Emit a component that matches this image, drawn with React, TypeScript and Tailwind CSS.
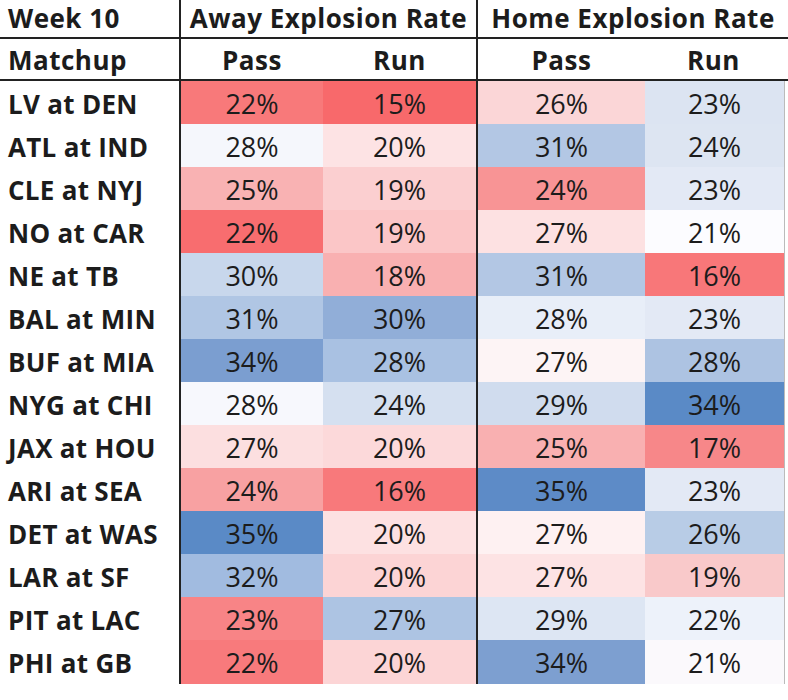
const rows: [string, [number, string], [number, string], [number, string], [number, string]][] = [
  ["LV at DEN", [22, "bg-[#f8797a]"], [15, "bg-[#f8696b]"], [26, "bg-[#fbd6d7]"], [23, "bg-[#dce4f2]"]],
  ["ATL at IND", [28, "bg-[#f5f7fc]"], [20, "bg-[#fde3e4]"], [31, "bg-[#b3c7e4]"], [24, "bg-[#dde5f2]"]],
  ["CLE at NYJ", [25, "bg-[#f9b2b3]"], [19, "bg-[#fbcfd0]"], [24, "bg-[#f89495]"], [23, "bg-[#e3e9f5]"]],
  ["NO at CAR", [22, "bg-[#f86d6f]"], [19, "bg-[#fbc6c7]"], [27, "bg-[#fde1e2]"], [21, "bg-[#fcfcff]"]],
  ["NE at TB", [30, "bg-[#c8d7ec]"], [18, "bg-[#f9b0b1]"], [31, "bg-[#b3c7e4]"], [16, "bg-[#f87779]"]],
  ["BAL at MIN", [31, "bg-[#b0c6e4]"], [30, "bg-[#91aed8]"], [28, "bg-[#e8eef8]"], [23, "bg-[#e3e9f5]"]],
  ["BUF at MIA", [34, "bg-[#7b9ed0]"], [28, "bg-[#a9c1e2]"], [27, "bg-[#fdf4f5]"], [28, "bg-[#adc3e2]"]],
  ["NYG at CHI", [28, "bg-[#f7f8fd]"], [24, "bg-[#d5e0f0]"], [29, "bg-[#d0dcee]"], [34, "bg-[#5a8ac6]"]],
  ["JAX at HOU", [27, "bg-[#fcdfe0]"], [20, "bg-[#fcd9da]"], [25, "bg-[#f9b0b1]"], [17, "bg-[#f78789]"]],
  ["ARI at SEA", [24, "bg-[#f8a1a2]"], [16, "bg-[#f8797b]"], [35, "bg-[#5d8bc7]"], [23, "bg-[#e3e9f5]"]],
  ["DET at WAS", [35, "bg-[#5a8ac6]"], [20, "bg-[#fde1e2]"], [27, "bg-[#fef1f2]"], [26, "bg-[#b8cce6]"]],
  ["LAR at SF", [32, "bg-[#a1bbe0]"], [20, "bg-[#fcd4d5]"], [27, "bg-[#fde3e4]"], [19, "bg-[#f9c9ca]"]],
  ["PIT at LAC", [23, "bg-[#f88486]"], [27, "bg-[#adc4e3]"], [29, "bg-[#dde6f3]"], [22, "bg-[#edf2fa]"]],
  ["PHI at GB", [22, "bg-[#f87a7c]"], [20, "bg-[#fcd5d6]"], [34, "bg-[#7d9fd0]"], [21, "bg-[#fbf9fc]"]],
]

export default function App() {
  return (
    <div className="w-[788px] h-[700px] bg-white text-[#1c1c1c] font-['Open_Sans','Liberation_Sans',sans-serif] text-[26px]">
      {/* Group header */}
      <div className="grid grid-cols-[181px_297px_310px] h-[39px] border-b-2 border-[#222] font-bold tracking-[0.5px]">
        <div className="pl-2 border-r-2 border-[#222] leading-[37px]">Week 10</div>
        <div className="text-center border-r-2 border-[#222] leading-[37px]">Away Explosion Rate</div>
        <div className="text-center leading-[37px]">Home Explosion Rate</div>
      </div>
      {/* Sub header */}
      <div className="grid grid-cols-[181px_142px_155px_167px_141px] h-[42px] border-b-2 border-[#222] font-bold tracking-[0.5px]">
        <div className="pl-2 border-r-2 border-[#222] leading-[40px] pt-[1px]">Matchup</div>
        <div className="text-center leading-[40px] pt-[1px]">Pass</div>
        <div className="text-center border-r-2 border-[#222] leading-[40px] pt-[1px]">Run</div>
        <div className="text-center leading-[40px] pt-[1px]">Pass</div>
        <div className="text-center leading-[40px] pt-[1px] pr-1">Run</div>
      </div>
      {/* Data */}
      {rows.map(([label, ap, ar, hp, hr]) => (
        <div key={label} className="grid grid-cols-[181px_142px_155px_167px_141px] h-[43px]">
          <div className="pl-2 pt-[2px] font-bold tracking-[0.3px] border-r-2 border-[#222] leading-[42px]">{label}</div>
          <div className={`${ap[1]} pt-[2px] text-center text-[27px] leading-[42px]`}>{ap[0]}%</div>
          <div className={`${ar[1]} pt-[2px] text-center text-[27px] leading-[42px] border-r-2 border-[#222]`}>{ar[0]}%</div>
          <div className={`${hp[1]} pt-[2px] text-center text-[27px] leading-[42px]`}>{hp[0]}%</div>
          <div className={`${hr[1]} pt-[2px] text-center text-[27px] leading-[42px] border-r border-[#bbb] mr-[1px]`}>{hr[0]}%</div>
        </div>
      ))}
    </div>
  )
}
